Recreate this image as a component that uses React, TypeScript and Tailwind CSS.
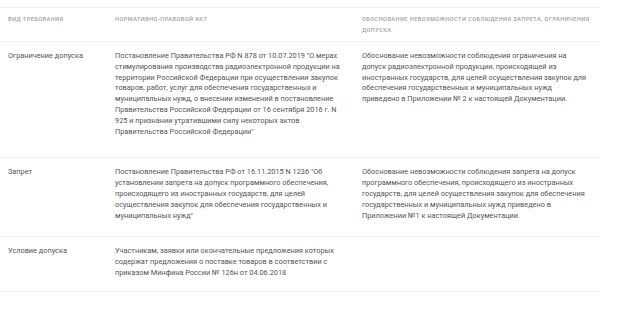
const rows = [
  {
    type: "Ограничение допуска",
    act: "Постановление Правительства РФ N 878 от 10.07.2019 \"О мерах стимулирования производства радиоэлектронной продукции на территории Российской Федерации при осуществлении закупок товаров, работ, услуг для обеспечения государственных и муниципальных нужд, о внесении изменений в постановление Правительства Российской Федерации от 16 сентября 2016 г. N 925 и признании утратившими силу некоторых актов Правительства Российской Федерации\"",
    reason:
      "Обоснование невозможности соблюдения ограничения на допуск радиоэлектронной продукции, происходящей из иностранных государств, для целей осуществления закупок для обеспечения государственных и муниципальных нужд приведено в Приложении № 2 к настоящей Документации.",
    pad: "pt-[9px] pb-[20px]",
  },
  {
    type: "Запрет",
    act: "Постановление Правительства РФ от 16.11.2015 N 1236 \"Об установлении запрета на допуск программного обеспечения, происходящего из иностранных государств, для целей осуществления закупок для обеспечения государственных и муниципальных нужд\"",
    reason:
      "Обоснование невозможности соблюдения запрета на допуск программного обеспечения, происходящего из иностранных государств, для целей осуществления закупок для обеспечения государственных и муниципальных нужд приведено в Приложении №1 к настоящей Документации.",
    pad: "pt-[9px] pb-[15px]",
  },
  {
    type: "Условие допуска",
    act: "Участникам, заявки или окончательные предложения которых содержат предложения о поставке товаров в соответствии с приказом Минфина России № 126н от 04.06.2018",
    reason: "",
    pad: "pt-[9px] pb-[12px]",
  },
];

export default function App() {
  return (
    <div className="w-[623px] h-[316px] bg-white pt-[7px] font-['Roboto',sans-serif]">
      <div className="w-[600px] border-t border-[#eef0f4]">
        <div className="grid grid-cols-[107px_247px_246px] border-b border-[#eef0f4] text-[5.6px] leading-[11px] tracking-[0.08em] uppercase font-medium text-[#9aa1ab]">
          <div className="pl-[8px] pt-[6px] pb-[5px]">Вид требования</div>
          <div className="pl-[8px] pr-[8px] pt-[6px] pb-[5px]">Нормативно-правовой акт</div>
          <div className="pl-[8px] pt-[6px] pb-[5px] whitespace-nowrap">
            Обоснование невозможности соблюдения запрета, ограничения
            <br />
            допуска
          </div>
        </div>
        {rows.map((r) => (
          <div
            key={r.type}
            className={`grid grid-cols-[107px_247px_246px] border-b border-[#eef0f4] text-[7.35px] leading-[10.8px] text-[#555555] ${r.pad}`}
          >
            <div className="pl-[8px]">{r.type}</div>
            <div className="pl-[8px] pr-[8px]">{r.act}</div>
            <div className="pl-[8px] pr-[9px]">{r.reason}</div>
          </div>
        ))}
      </div>
    </div>
  );
}
